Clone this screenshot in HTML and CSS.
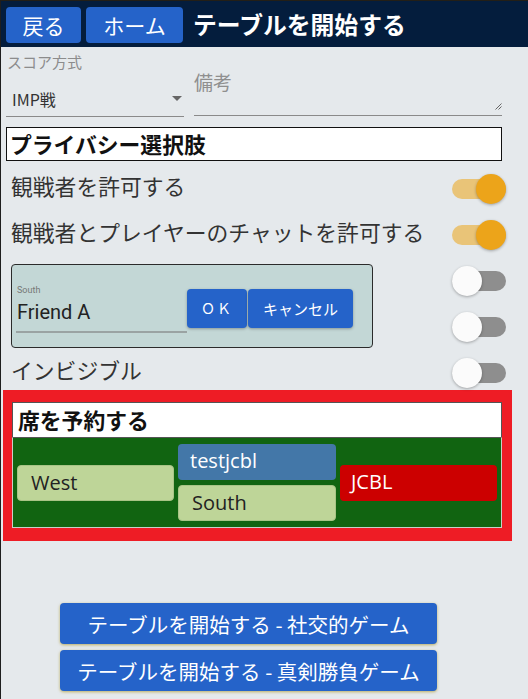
FILE: index.html
```html
<!DOCTYPE html>
<html lang="ja">
<head>
<meta charset="utf-8">
<link rel="stylesheet" href="styles.css">
</head>
<body>
<div class="app">
  <header class="topbar">
    <button class="navbtn btn-back">戻る</button>
    <button class="navbtn btn-home">ホーム</button>
    <h1 class="title">テーブルを開始する</h1>
  </header>
  <main class="content">
    <div class="form-row">
      <div class="select-col">
        <div class="small-label">スコア方式</div>
        <div class="select-field">
          <span class="select-value">IMP戦</span>
          <span class="select-arrow"></span>
        </div>
      </div>
      <div class="memo-col">
        <div class="memo-label">備考</div>
        <svg class="resize" width="7" height="7" viewBox="0 0 7 7"><path d="M6.5 0.5 L0.5 6.5 M6.5 3.5 L3.5 6.5" stroke="#666" stroke-width="1" fill="none"/></svg>
      </div>
    </div>

    <div class="section-head">プライバシー選択肢</div>

    <div class="options">
      <div class="opt-label">観戦者を許可する</div>
      <div class="toggle on"><span class="track"></span><span class="knob"></span></div>

      <div class="opt-label">観戦者とプレイヤーのチャットを許可する</div>
      <div class="toggle on"><span class="track"></span><span class="knob"></span></div>

      <div class="friend-card">
        <div class="friend-field">
          <div class="friend-label">South</div>
          <div class="friend-value">Friend A</div>
        </div>
        <button class="cardbtn btn-ok">ＯＫ</button>
        <button class="cardbtn btn-cancel">キャンセル</button>
      </div>
      <div class="toggle off row3"><span class="track"></span><span class="knob"></span></div>
      <div class="toggle off row4"><span class="track"></span><span class="knob"></span></div>

      <div class="opt-label">インビジブル</div>
      <div class="toggle off"><span class="track"></span><span class="knob"></span></div>
    </div>

    <div class="seat-wrap">
      <div class="seat-head">席を予約する</div>
      <div class="seat-grid">
        <div class="seat-col center">
          <div class="tile tile-green">West</div>
        </div>
        <div class="seat-col">
          <div class="tile tile-blue">testjcbl</div>
          <div class="tile tile-green">South</div>
        </div>
        <div class="seat-col center">
          <div class="tile tile-red">JCBL</div>
        </div>
      </div>
    </div>

    <div class="start-buttons">
      <button class="startbtn">テーブルを開始する - 社交的ゲーム</button>
      <button class="startbtn">テーブルを開始する - 真剣勝負ゲーム</button>
    </div>
  </main>
</div>
</body>
</html>
```
FILE: styles.css
```css
* { box-sizing: border-box; }
html, body {
  margin: 0;
  padding: 0;
  background: #e5e9ec;
}
body {
  font-family: "Noto Sans CJK JP", "Noto Sans", sans-serif;
  color: #222;
  border-left: 1px solid #1e1e1e;
  border-top: 1px solid #231f17;
  min-height: 699px;
}
.app { width: 527px; }

.topbar {
  background: #041d3d;
  height: 46px;
  display: flex;
  align-items: center;
  padding: 0 5px;
  gap: 5px;
}
.navbtn {
  background: #2563c9;
  color: #fff;
  border: none;
  border-radius: 4px;
  height: 36px;
  font-family: inherit;
  font-size: 21px;
  line-height: 36px;
  padding: 0;
  margin-top: 1px;
}
.btn-back { width: 75px; }
.btn-home { width: 97px; }
.title {
  margin: 0 0 0 5px;
  color: #fff;
  font-size: 23.8px;
  font-weight: 700;
  line-height: 36px;
}

.content {
  padding: 6px 26px 0 5px;
}

.form-row {
  display: flex;
  gap: 10px;
}
.select-col { width: 178px; }
.small-label {
  font-size: 15px;
  line-height: 18px;
  color: #8c8c8c;
  padding-left: 1px;
}
.select-field {
  height: 46px;
  border-bottom: 1px solid #8a8a8a;
  display: flex;
  align-items: center;
  justify-content: space-between;
  padding: 10px 0 0 6px;
}
.select-value { font-size: 16px; color: #333; }
.select-arrow {
  width: 0; height: 0;
  border-left: 5px solid transparent;
  border-right: 5px solid transparent;
  border-top: 5px solid #666;
  margin-right: 2px;
}
.memo-col {
  flex: 1;
  height: 63px;
  border-bottom: 1px solid #8a8a8a;
  display: flex;
  justify-content: space-between;
  align-items: flex-end;
  padding-bottom: 5px;
}
.memo-label {
  align-self: flex-start;
  margin-top: 17px;
  font-size: 19px;
  line-height: 24px;
  color: #8f8f8f;
}

.section-head {
  margin-top: 10px;
  background: #fff;
  border: 1px solid #111;
  font-size: 21.8px;
  font-weight: 700;
  line-height: 32px;
  padding-left: 3px;
  color: #111;
}

.options {
  margin-top: 13px;
  display: grid;
  grid-template-columns: 1fr 54px;
  grid-auto-rows: 30px;
  row-gap: 16px;
  padding-left: 5px;
  margin-right: -4px;
}
.opt-label {
  font-size: 21.8px;
  line-height: 30px;
  color: #333;
  margin-top: -3px;
  white-space: nowrap;
}
.toggle {
  position: relative;
  width: 54px;
  height: 30px;
}
.toggle .track {
  position: absolute;
  left: 0; right: 0; top: 5px;
  height: 20px;
  border-radius: 10px;
}
.toggle .knob {
  position: absolute;
  top: 0;
  width: 30px;
  height: 30px;
  border-radius: 50%;
  box-shadow: 0 1px 3px rgba(0,0,0,0.3);
}
.toggle.on .track { background: #e9c478; }
.toggle.on .knob { right: 0; background: #eca41a; }
.toggle.off .track { background: #8e8e8e; }
.toggle.off .knob { left: 0; background: #fbfbfb; }
.toggle.row3 { grid-column: 2; grid-row: 3; }
.toggle.row4 { grid-column: 2; grid-row: 4; }

.friend-card {
  grid-column: 1;
  grid-row: 3 / span 2;
  align-self: center;
  width: 362px;
  height: 84px;
  margin-top: 3px;
  background: #c3d7d6;
  border: 1px solid #2b2b2b;
  border-radius: 4px;
  display: flex;
  align-items: flex-start;
  padding: 19px 0 0 4px;
}
.friend-field {
  width: 171px;
  border-bottom: 2px solid #9aa3a3;
  padding-bottom: 6px;
}
.friend-label {
  font-family: "Roboto", "Noto Sans", sans-serif;
  font-size: 9px;
  line-height: 12px;
  color: #777;
  padding-left: 1px;
}
.friend-value {
  font-family: "Roboto", "Noto Sans", sans-serif;
  font-size: 20px;
  line-height: 26px;
  padding-left: 1px;
  color: #222;
  margin-top: 3px;
}
.cardbtn {
  margin-top: 5px;
  height: 39px;
  background: #2563c9;
  color: #fff;
  border: none;
  border-radius: 4px;
  font-family: inherit;
  font-size: 15px;
  padding: 0;
  box-shadow: 0 1px 3px rgba(0,0,0,0.3);
}
.btn-ok { width: 60px; letter-spacing: 2px; font-size: 14px; }
.btn-cancel { width: 105px; margin-left: 1px; }

.seat-wrap {
  margin: 2px -10px 0 -3px;
  background: #ee1c25;
  padding: 12px 10px 13px 9px;
}
.seat-head {
  background: #fff;
  border: 1px solid #555;
  border-bottom: none;
  font-size: 21.8px;
  font-weight: 700;
  line-height: 34px;
  padding-left: 5px;
  color: #111;
}
.seat-grid {
  background: #116411;
  border: 1px solid #c8d0c8;
  border-top: 1px solid #555;
  display: grid;
  grid-template-columns: 157px 158px 157px;
  column-gap: 4px;
  padding: 6px 4px 6px 4px;
  justify-content: space-between;
}
.seat-col {
  display: flex;
  flex-direction: column;
  gap: 5px;
}
.seat-col.center { justify-content: center; }
.tile {
  height: 36px;
  border-radius: 4px;
  font-family: "Open Sans", "Noto Sans", sans-serif;
  font-size: 20px;
  line-height: 34px;
  padding-left: 13px;
}
.tile-green { background: #bed598; color: #222; border: 1px solid #a8c486; }
.tile-blue { background: #4377a8; color: #fff; padding-left: 12px; }
.tile-red { background: #cc0000; color: #fff; padding-left: 11px; }

.start-buttons {
  margin-top: 62px;
  margin-left: 54px;
  display: flex;
  flex-direction: column;
  gap: 6px;
  width: 377px;
}
.startbtn {
  height: 41px;
  background: #2563c9;
  color: #fff;
  border: none;
  border-radius: 4px;
  font-family: inherit;
  font-size: 20.5px;
  padding: 0;
  box-shadow: 0 1px 3px rgba(170,150,40,0.7);
}
```
